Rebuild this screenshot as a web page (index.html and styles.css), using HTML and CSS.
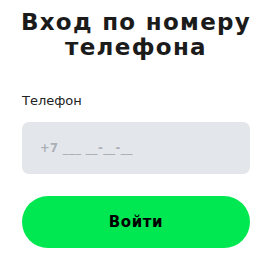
FILE: index.html
```html
<!DOCTYPE html>
<html lang="ru">
<head>
  <meta charset="UTF-8">
  <title>Вход по номеру телефона</title>
  <meta name="viewport" content="width=device-width, initial-scale=1.0">
  <link rel="stylesheet" href="styles.css">
</head>
<body>
  <div class="login-box">
    <div class="login-title">Вход по номеру телефона</div>
    <label class="field-label" for="phone">Телефон</label>
    <input class="phone-input" id="phone" type="tel" placeholder="+7 ___ __-__-__">
    <button class="login-btn">Войти</button>
  </div>
</body>
</html>
```
FILE: styles.css
```css
body {
  margin: 0;
  background: #fff;
  font-family: 'DejaVu Sans', Arial, sans-serif;
  color: #1b1b1b;
}
.login-box {
  width: 228px;
  padding: 10px 24px 0 22px;
  display: flex;
  flex-direction: column;
}
.login-title {
  font-size: 23px;
  font-weight: bold;
  line-height: 25px;
  text-align: center;
  margin: 0 -12px 33px -12px;
  letter-spacing: 1.3px;
}
.field-label {
  font-size: 13px;
  line-height: 16px;
  margin-bottom: 13px;
  color: #222;
}
.phone-input {
  box-sizing: border-box;
  width: 228px;
  height: 52px;
  border: none;
  border-radius: 7px;
  background: #e3e6ea;
  padding: 0 18px;
  font-family: inherit;
  font-size: 11.5px;
  font-weight: bold;
  letter-spacing: 0.4px;
  outline: none;
}
.phone-input::placeholder {
  color: #abb0b6;
}
.login-btn {
  margin-top: 22px;
  width: 228px;
  height: 52px;
  border: none;
  border-radius: 26px;
  background: #00e851;
  font-family: inherit;
  font-size: 15px;
  font-weight: bold;
  letter-spacing: 0.6px;
  color: #000;
  cursor: pointer;
}
```
